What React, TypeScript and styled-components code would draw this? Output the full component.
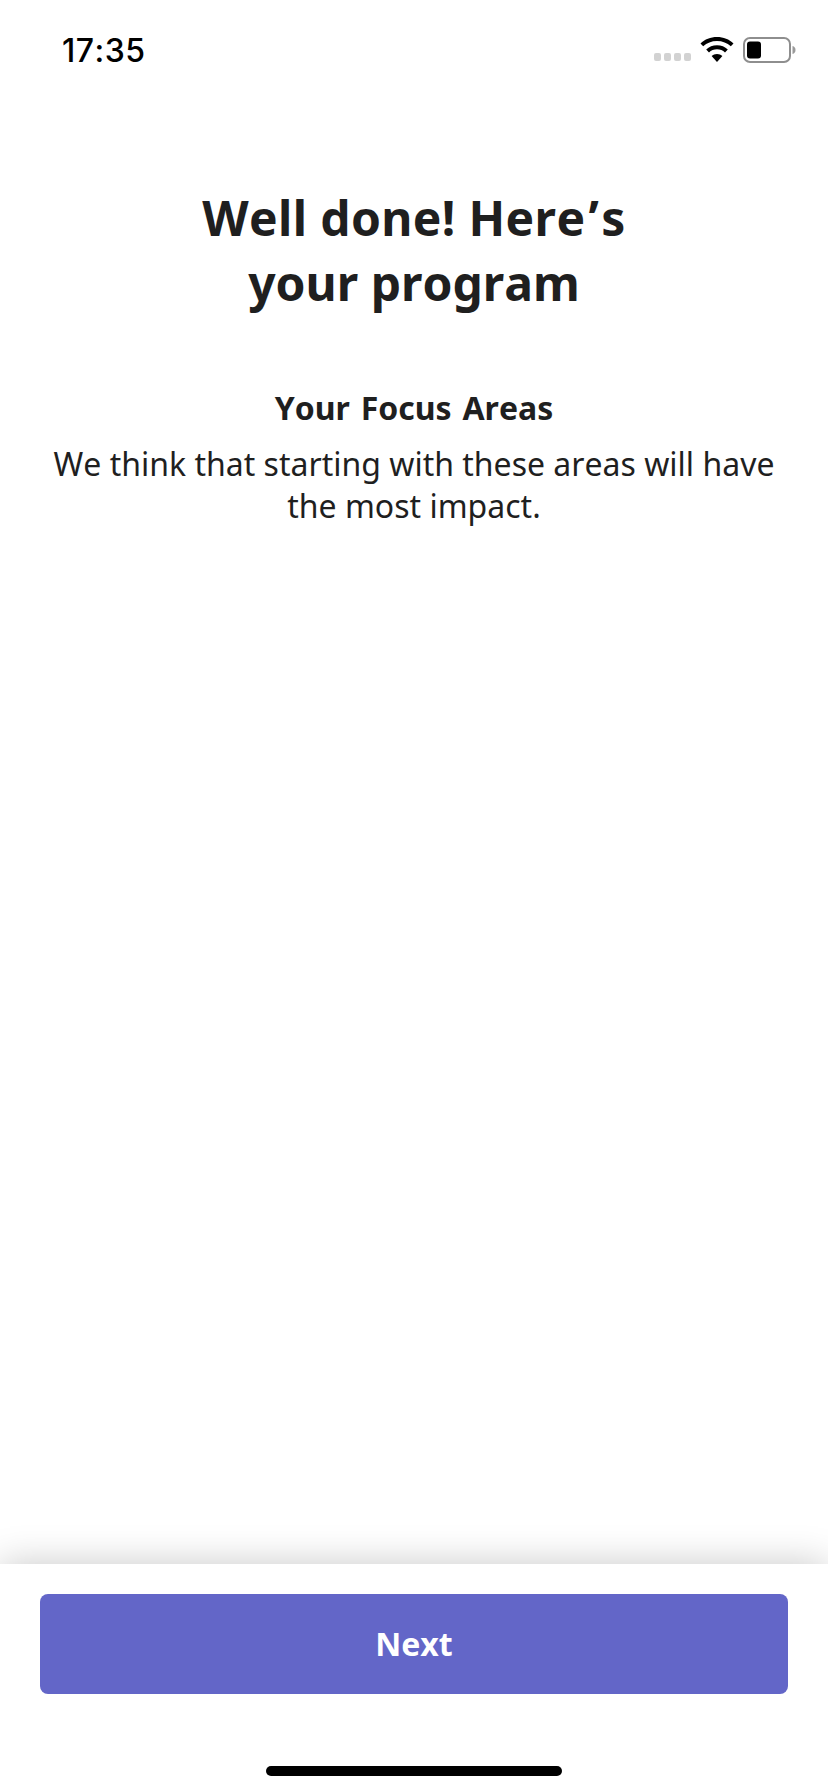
import React from "react";
import styled, { createGlobalStyle } from "styled-components";

const Global = createGlobalStyle`
  html, body { margin: 0; padding: 0; background: #fff; }
  * { box-sizing: border-box; }
`;

const Screen = styled.div`
  width: 828px;
  height: 1792px;
  display: flex;
  flex-direction: column;
  background: #fff;
  overflow: hidden;
  font-family: "Noto Sans", sans-serif;
  font-kerning: none;
  color: #1f1f1f;
`;

const StatusBar = styled.header`
  height: 100px;
  flex: none;
  display: flex;
  justify-content: space-between;
  align-items: flex-start;
  padding: 31px 32px 0 62px;
`;

const Clock = styled.time`
  font-family: Inter, "Liberation Sans", sans-serif;
  font-size: 32px;
  line-height: 40px;
  font-weight: 500;
  letter-spacing: 0.5px;
  color: #000;
`;

const StatusIcons = styled.div`
  display: flex;
  align-items: flex-start;
  gap: 9px;
  margin-top: 6px;
`;

const Signal = styled.div`
  display: flex;
  gap: 3px;
  margin-top: 16px;
`;

const SignalDot = styled.span`
  width: 7px;
  height: 8px;
  border-radius: 2px;
  background: #d2d2d2;
`;

const Content = styled.main`
  flex: 1;
  display: flex;
  flex-direction: column;
  align-items: center;
  padding: 85px 48px 0;
  text-align: center;
`;

const Title = styled.h1`
  margin: 0;
  font-size: 48px;
  line-height: 65px;
  font-weight: 700;
`;

const TitleLead = styled.span`
  letter-spacing: 0.35px;
`;

const Apostrophe = styled.span`
  margin: 0 2px 0 3px;
`;

const Subtitle = styled.h2`
  margin: 71px 0 0;
  font-size: 32px;
  line-height: 44px;
  font-weight: 700;
  word-spacing: 2.5px;
`;

const Body = styled.p`
  margin: 13px 0 0;
  font-size: 32px;
  line-height: 42px;
  font-weight: 400;
`;

const Footer = styled.footer`
  flex: none;
  height: 228px;
  display: flex;
  flex-direction: column;
  align-items: center;
  padding: 30px 40px 16px;
  background: #fff;
  box-shadow: 0 0 36px rgba(0, 0, 0, 0.22);
`;

const NextButton = styled.button`
  width: 100%;
  height: 100px;
  flex: none;
  border: 0;
  border-radius: 8px;
  padding: 0 0 2px;
  background: #6366c8;
  color: #fff;
  font-family: "Noto Sans", sans-serif;
  font-kerning: none;
  font-size: 32px;
  font-weight: 700;
`;

const HomeBar = styled.div`
  margin-top: auto;
  width: 296px;
  height: 10px;
  border-radius: 5px;
  background: #000;
`;

const Wifi = () => (
  <svg width="34" height="25" viewBox="0 0 34 25">
    <path d="M17 0C10.5 0 4.8 2.4 0.5 6.4L3.2 9.3C6.8 6 11.6 4 17 4s10.2 2 13.8 5.3l2.7-2.9C29.2 2.4 23.5 0 17 0z" fill="#000" />
    <path d="M17 8.2c-4.2 0-8 1.6-10.8 4.2l2.8 3c2.1-1.9 4.9-3.1 8-3.1s5.9 1.2 8 3.1l2.8-3C25 9.8 21.2 8.2 17 8.200z" fill="#000" />
    <path d="M17 17c-2.1 0-4 .8-5.4 2.1L17 25l5.4-5.900C21 17.8 19.1 17 17 17z" fill="#000" />
  </svg>
);

const Battery = () => (
  <svg width="53" height="26" viewBox="0 0 53 26">
    <rect x="1" y="1" width="46" height="24" rx="6" fill="none" stroke="#8e8e8e" strokeWidth="2" />
    <rect x="4" y="4.500" width="14" height="17" rx="3" fill="#000" />
    <path d="M49.500 9c2 .5 3 2 3 4s-1 3.500-3 4z" fill="#9a9a9a" />
  </svg>
);

export default function App() {
  return (
    <Screen>
      <Global />
      <StatusBar>
        <Clock>17:35</Clock>
        <StatusIcons>
          <Signal>
            <SignalDot />
            <SignalDot />
            <SignalDot />
            <SignalDot />
          </Signal>
          <Wifi />
          <Battery />
        </StatusIcons>
      </StatusBar>
      <Content>
        <Title>
          <TitleLead>
            Well done! Here<Apostrophe>’</Apostrophe>s
          </TitleLead>
          <br />
          your program
        </Title>
        <Subtitle>Your Focus Areas</Subtitle>
        <Body>We think that starting with these areas will have the most impact.</Body>
      </Content>
      <Footer>
        <NextButton>Next</NextButton>
        <HomeBar />
      </Footer>
    </Screen>
  );
}
